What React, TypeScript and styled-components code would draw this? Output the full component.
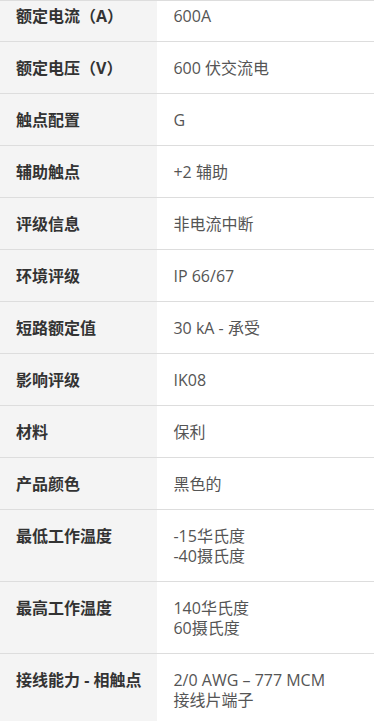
import React from "react";
import styled, { createGlobalStyle } from "styled-components";

const Global = createGlobalStyle`
  html, body { margin: 0; padding: 0; background: #ffffff; }
  body { font-family: "Open Sans", "Noto Sans CJK SC", sans-serif; }
`;

const Table = styled.table`
  width: 374px;
  border-collapse: collapse;
  font-family: "Open Sans", "Noto Sans CJK SC", sans-serif;
  font-size: 16px;
  line-height: 20px;
`;

const Row = styled.tr`
  border-top: 1px solid #dddddd;
`;

const Label = styled.th<{ $first?: boolean }>`
  width: 125px;
  background: #f4f4f4;
  color: #333333;
  font-weight: 700;
  text-align: left;
  vertical-align: top;
  padding: ${(p) => (p.$first ? "4.5px" : "15.5px")} 16px 15.5px 16px;
  white-space: nowrap;
`;

const Value = styled.td<{ $first?: boolean }>`
  color: #555555;
  font-weight: 400;
  vertical-align: top;
  padding: ${(p) => (p.$first ? "4.5px" : "15.5px")} 16px 15.5px 16px;
`;

const rows: [string, string[]][] = [
  ["额定电流（A）", ["600A"]],
  ["额定电压（V）", ["600 伏交流电"]],
  ["触点配置", ["G"]],
  ["辅助触点", ["+2 辅助"]],
  ["评级信息", ["非电流中断"]],
  ["环境评级", ["IP 66/67"]],
  ["短路额定值", ["30 kA - 承受"]],
  ["影响评级", ["IK08"]],
  ["材料", ["保利"]],
  ["产品颜色", ["黑色的"]],
  ["最低工作温度", ["-15华氏度", "-40摄氏度"]],
  ["最高工作温度", ["140华氏度", "60摄氏度"]],
  ["接线能力 - 相触点", ["2/0 AWG – 777 MCM", "接线片端子"]],
];

export default function App() {
  return (
    <>
      <Global />
      <Table>
        <tbody>
          {rows.map(([label, values], i) => (
            <Row key={label}>
              <Label $first={i === 0}>{label}</Label>
              <Value $first={i === 0}>
                {values.map((v, j) => (
                  <React.Fragment key={j}>
                    {j > 0 && <br />}
                    {v}
                  </React.Fragment>
                ))}
              </Value>
            </Row>
          ))}
        </tbody>
      </Table>
    </>
  );
}
